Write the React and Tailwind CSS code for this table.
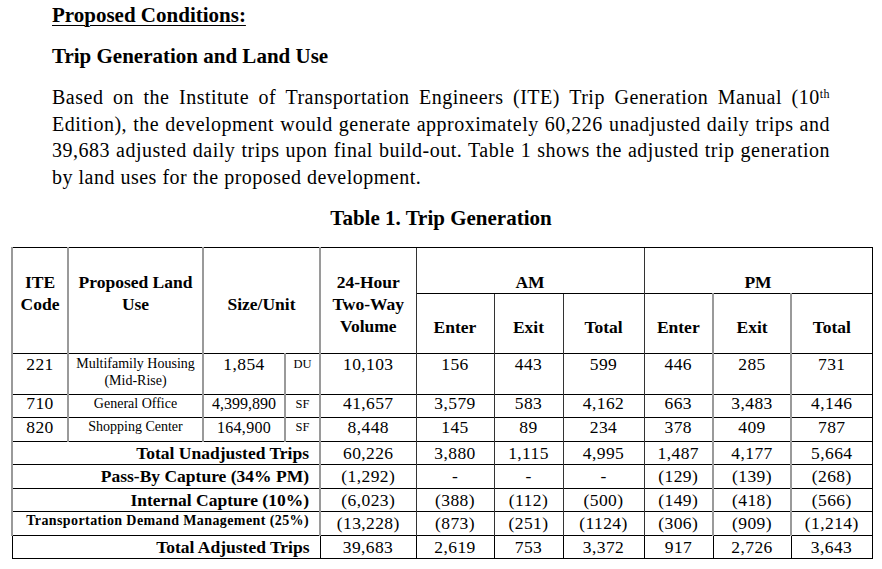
const SERIF = "font-['Liberation_Serif','Times_New_Roman',serif]"

const widths = [56, 135, 82, 35, 96, 78, 69, 81, 69, 78, 81]

// left edge of each column: gray double-ish rule or a thin dark rule
const GRAY = 'border-l-2 border-l-[#9a9a9a]'
const DARK = 'border-l border-l-[#333]'
const edges = [GRAY, GRAY, GRAY, GRAY, GRAY, DARK, DARK, DARK, DARK, GRAY, GRAY]

function Cell({ col, span = 1, rows = 1, last = false, className = '', children }) {
  const end = col + span - 1 === widths.length - 1
  return (
    <td
      colSpan={span}
      rowSpan={rows}
      className={`p-0 align-top border-t border-t-black ${
        last ? 'border-l border-l-black border-b border-b-black' : edges[col]
      } ${end ? 'border-r border-r-black' : ''} ${className}`}
    >
      {children}
    </td>
  )
}

const dataRows = [
  {
    code: '221',
    use: ['Multifamily Housing', '(Mid-Rise)'],
    size: '1,854',
    sizeCls: 'pt-[2px] text-[17.5px] tracking-[0.4px]',
    unit: 'DU',
    vals: ['10,103', '156', '443', '599', '446', '285', '731'],
    h: 'h-[41px]',
    pt: 'pt-[2px]',
    usePt: 'pt-[1px]',
    unitPt: 'pt-[3px]',
  },
  {
    code: '710',
    use: ['General Office'],
    size: '4,399,890',
    sizeCls: 'pt-[1px] text-[16px]',
    unit: 'SF',
    vals: ['41,657', '3,579', '583', '4,162', '663', '3,483', '4,146'],
    h: 'h-[23px]',
    pt: 'pt-0',
    usePt: 'pt-0',
    unitPt: 'pt-[2px]',
  },
  {
    code: '820',
    use: ['Shopping Center'],
    size: '164,900',
    sizeCls: 'pt-[2px] text-[16px] tracking-[0.3px]',
    unit: 'SF',
    vals: ['8,448', '145', '89', '234', '378', '409', '787'],
    h: 'h-[24px]',
    pt: 'pt-[1px]',
    usePt: 'pt-0',
    unitPt: 'pt-[2px]',
  },
]

const summaryRows = [
  { label: 'Total Unadjusted Trips', vals: ['60,226', '3,880', '1,115', '4,995', '1,487', '4,177', '5,664'], h: 'h-[23px]' },
  { label: 'Pass-By Capture (34% PM)', vals: ['(1,292)', '-', '-', '-', '(129)', '(139)', '(268)'], h: 'h-[24px]' },
  { label: 'Internal Capture (10%)', vals: ['(6,023)', '(388)', '(112)', '(500)', '(149)', '(418)', '(566)'], h: 'h-[23px]' },
  {
    label: 'Transportation Demand Management (25%)',
    small: true,
    vals: ['(13,228)', '(873)', '(251)', '(1124)', '(306)', '(909)', '(1,214)'],
    h: 'h-[24px]',
  },
  { label: 'Total Adjusted Trips', vals: ['39,683', '2,619', '753', '3,372', '917', '2,726', '3,643'], h: 'h-[23px]', last: true },
]

const NUM = 'text-center text-[17.5px] leading-[16px] tracking-[0.4px]'
const HEAD = 'text-center font-bold text-[17.5px] leading-[22px]'

function TripTable() {
  return (
    <table className="ml-[11px] w-[860px] table-fixed border-collapse text-black">
      <colgroup>
        {widths.map((w, i) => (
          <col key={i} style={{ width: w }} />
        ))}
      </colgroup>
      <tbody>
        <tr className="h-[46px]">
          <Cell col={0} rows={2} className={`${HEAD} pt-[23px]`}>
            ITE
            <br />
            Code
          </Cell>
          <Cell col={1} rows={2} className={`${HEAD} pt-[23px]`}>
            Proposed Land
            <br />
            Use
          </Cell>
          <Cell col={2} span={2} rows={2} className={`${HEAD} pt-[45px]`}>
            Size/Unit
          </Cell>
          <Cell col={4} rows={2} className={`${HEAD} pt-[23px]`}>
            24-Hour
            <br />
            Two-Way
            <br />
            Volume
          </Cell>
          <Cell col={5} span={3} className={`${HEAD} pt-[23px]`}>
            AM
          </Cell>
          <Cell col={8} span={3} className={`${HEAD} pt-[23px]`}>
            PM
          </Cell>
        </tr>
        <tr className="h-[60px]">
          {['Enter', 'Exit', 'Total', 'Enter', 'Exit', 'Total'].map((t, i) => (
            <Cell key={i} col={5 + i} className={`${HEAD} pt-[22px]`}>
              {t}
            </Cell>
          ))}
        </tr>

        {dataRows.map((r) => (
          <tr key={r.code} className={r.h}>
            <Cell col={0} className={`${NUM} ${r.pt}`}>
              {r.code}
            </Cell>
            <Cell col={1} className={`text-center text-[14px] leading-[17px] ${r.usePt}`}>
              {r.use.map((u, i) => (
                <div key={i}>{u}</div>
              ))}
            </Cell>
            <Cell col={2} className={`text-center leading-[16px] ${r.sizeCls}`}>
              {r.size}
            </Cell>
            <Cell col={3} className={`text-center text-[12.5px] leading-[14px] ${r.unitPt}`}>
              {r.unit}
            </Cell>
            {r.vals.map((v, i) => (
              <Cell key={i} col={4 + i} className={`${NUM} ${r.pt}`}>
                {v}
              </Cell>
            ))}
          </tr>
        ))}

        {summaryRows.map((r) => (
          <tr key={r.label} className={r.h}>
            <Cell
              col={0}
              span={4}
              last={r.last}
              className={`pr-[10px] text-right font-bold ${
                r.small
                  ? 'pt-[1px] text-[14px] leading-[16px] tracking-[0.4px]'
                  : 'pt-[3px] text-[17.5px] leading-[16px]'
              }`}
            >
              {r.label}
            </Cell>
            {r.vals.map((v, i) => (
              <Cell key={i} col={4 + i} last={r.last} className={`${NUM} pt-[3px]`}>
                {v}
              </Cell>
            ))}
          </tr>
        ))}
      </tbody>
    </table>
  )
}

export default function App() {
  const lines = [
    <>
      Based on the Institute of Transportation Engineers (ITE) Trip Generation Manual (10
      <sup className="text-[12px]">th</sup>
    </>,
    'Edition), the development would generate approximately 60,226 unadjusted daily trips and',
    '39,683 adjusted daily trips upon final build-out. Table 1 shows the adjusted trip generation',
  ]

  return (
    <div className={`min-h-[569px] w-[882px] bg-white pt-[2px] text-black ${SERIF}`}>
      <div className="pl-[52px]">
        <h1 className="text-[21px] font-bold leading-[27px] underline decoration-1 underline-offset-[3px]">
          Proposed Conditions:
        </h1>
        <h2 className="mt-[14px] text-[21px] font-bold leading-[27px]">Trip Generation and Land Use</h2>
        <div className="mt-[14px] w-[778px] text-[20px] leading-[26.7px] tracking-[0.5px]">
          {lines.map((l, i) => (
            <div key={i} className="whitespace-nowrap text-justify [text-align-last:justify]">
              {l}
            </div>
          ))}
          <div>by land uses for the proposed development.</div>
        </div>
      </div>
      <div className="mt-[14px] text-center text-[21px] font-bold leading-[27px]">Table 1. Trip Generation</div>
      <div className="mt-[15px]">
        <TripTable />
      </div>
    </div>
  )
}
